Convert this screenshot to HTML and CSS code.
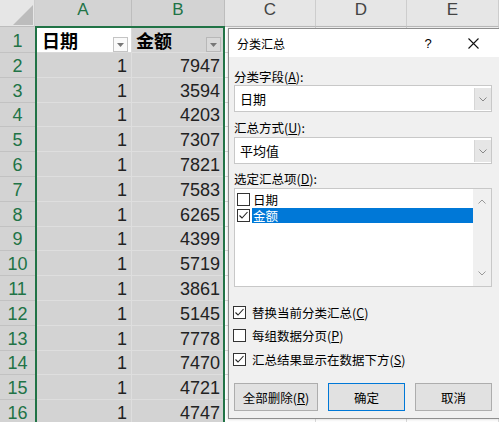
FILE: index.html
```html
<!DOCTYPE html>
<html lang="zh">
<head>
<meta charset="utf-8">
<title>分类汇总</title>
<link rel="stylesheet" href="styles.css">
</head>
<body>
<div class="sheet">
  <div class="corner"><svg width="20" height="20" viewBox="0 0 20 20"><polygon points="20,0 20,20 0,20" fill="#bcbcbc"/></svg></div>
  <div class="ch sel">A</div><div class="ch sel">B</div><div class="ch">C</div><div class="ch">D</div><div class="ch">E</div>

  <div class="rh">1</div>
  <div class="c hd active"><span>日期</span><span class="filt"><svg width="7" height="4" viewBox="0 0 7 4"><polygon points="0,0 7,0 3.5,4" fill="#777"/></svg></span></div>
  <div class="c hd sel b"><span>金额</span><span class="filt dark"><svg width="7" height="4" viewBox="0 0 7 4"><polygon points="0,0 7,0 3.5,4" fill="#777"/></svg></span></div>
  <div class="c"></div><div class="c"></div><div class="c"></div>

  <div class="rh">2</div><div class="c sel num">1</div><div class="c sel num">7947</div><div class="c"></div><div class="c"></div><div class="c"></div>
  <div class="rh">3</div><div class="c sel num">1</div><div class="c sel num">3594</div><div class="c"></div><div class="c"></div><div class="c"></div>
  <div class="rh">4</div><div class="c sel num">1</div><div class="c sel num">4203</div><div class="c"></div><div class="c"></div><div class="c"></div>
  <div class="rh">5</div><div class="c sel num">1</div><div class="c sel num">7307</div><div class="c"></div><div class="c"></div><div class="c"></div>
  <div class="rh">6</div><div class="c sel num">1</div><div class="c sel num">7821</div><div class="c"></div><div class="c"></div><div class="c"></div>
  <div class="rh">7</div><div class="c sel num">1</div><div class="c sel num">7583</div><div class="c"></div><div class="c"></div><div class="c"></div>
  <div class="rh">8</div><div class="c sel num">1</div><div class="c sel num">6265</div><div class="c"></div><div class="c"></div><div class="c"></div>
  <div class="rh">9</div><div class="c sel num">1</div><div class="c sel num">4399</div><div class="c"></div><div class="c"></div><div class="c"></div>
  <div class="rh">10</div><div class="c sel num">1</div><div class="c sel num">5719</div><div class="c"></div><div class="c"></div><div class="c"></div>
  <div class="rh">11</div><div class="c sel num">1</div><div class="c sel num">3861</div><div class="c"></div><div class="c"></div><div class="c"></div>
  <div class="rh">12</div><div class="c sel num">1</div><div class="c sel num">5145</div><div class="c"></div><div class="c"></div><div class="c"></div>
  <div class="rh">13</div><div class="c sel num">1</div><div class="c sel num">7778</div><div class="c"></div><div class="c"></div><div class="c"></div>
  <div class="rh">14</div><div class="c sel num">1</div><div class="c sel num">7470</div><div class="c"></div><div class="c"></div><div class="c"></div>
  <div class="rh">15</div><div class="c sel num">1</div><div class="c sel num">4721</div><div class="c"></div><div class="c"></div><div class="c"></div>
  <div class="rh">16</div><div class="c sel num">1</div><div class="c sel num">4747</div><div class="c"></div><div class="c"></div><div class="c"></div>

  <div class="selbox"></div>
</div>

<div class="dialog">
  <div class="titlebar">
    <span class="title">分类汇总</span>
    <span class="help">?</span>
    <span class="close"><svg width="11" height="11" viewBox="0 0 11 11"><path d="M0.5 0.5 L10.5 10.5 M10.5 0.5 L0.5 10.5" stroke="#111" stroke-width="1.1" fill="none"/></svg></span>
  </div>
  <div class="dbody">
    <div class="lbl">分类字段(<u>A</u>):</div>
    <div class="combo"><span class="val">日期</span><span class="drop"><svg width="8" height="5" viewBox="0 0 8 5"><path d="M0.5 0.5 L4 4 L7.5 0.5" stroke="#888" fill="none"/></svg></span></div>
    <div class="lbl l2">汇总方式(<u>U</u>):</div>
    <div class="combo"><span class="val">平均值</span><span class="drop"><svg width="8" height="5" viewBox="0 0 8 5"><path d="M0.5 0.5 L4 4 L7.5 0.5" stroke="#888" fill="none"/></svg></span></div>
    <div class="lbl l3">选定汇总项(<u>D</u>):</div>
    <div class="list">
      <div class="items">
        <div class="item">
          <svg class="box" width="13" height="13" viewBox="0 0 13 13"><rect x="0.5" y="0.5" width="12" height="12" fill="#fff" stroke="#333"/></svg>
          <span class="txt">日期</span>
        </div>
        <div class="item">
          <svg class="box" width="13" height="13" viewBox="0 0 13 13"><rect x="0.5" y="0.5" width="12" height="12" fill="#fff" stroke="#333"/><path d="M2.5 6.5 L5 9 L10.5 3" fill="none" stroke="#222" stroke-width="1.1"/></svg>
          <span class="txt hl">金额</span>
        </div>
      </div>
      <div class="vscroll">
        <svg width="8" height="5" viewBox="0 0 8 5"><path d="M0.5 4.5 L4 1 L7.5 4.5" stroke="#999" fill="none"/></svg>
        <svg width="8" height="5" viewBox="0 0 8 5"><path d="M0.5 0.5 L4 4 L7.5 0.5" stroke="#999" fill="none"/></svg>
      </div>
    </div>
    <div class="chk c1">
      <svg width="13" height="13" viewBox="0 0 13 13"><rect x="0.5" y="0.5" width="12" height="12" fill="#fff" stroke="#333"/><path d="M2.5 6.5 L5 9 L10.5 3" fill="none" stroke="#222" stroke-width="1.1"/></svg>
      <span>替换当前分类汇总(<u>C</u>)</span>
    </div>
    <div class="chk c2">
      <svg width="13" height="13" viewBox="0 0 13 13"><rect x="0.5" y="0.5" width="12" height="12" fill="#fff" stroke="#333"/></svg>
      <span>每组数据分页(<u>P</u>)</span>
    </div>
    <div class="chk c3">
      <svg width="13" height="13" viewBox="0 0 13 13"><rect x="0.5" y="0.5" width="12" height="12" fill="#fff" stroke="#333"/><path d="M2.5 6.5 L5 9 L10.5 3" fill="none" stroke="#222" stroke-width="1.1"/></svg>
      <span>汇总结果显示在数据下方(<u>S</u>)</span>
    </div>
    <div class="buttons">
      <button class="btn w1">全部删除(<u>R</u>)</button>
      <button class="btn w2 def">确定</button>
      <button class="btn w2">取消</button>
    </div>
  </div>
</div>
</body>
</html>
```

FILE: styles.css
```css
* { box-sizing: border-box; margin: 0; padding: 0; }
html, body { width: 499px; height: 422px; overflow: hidden; }
body {
  position: relative;
  background: #fff;
  font-family: "Liberation Sans", Arial, sans-serif;
}

/* ---------- spreadsheet ---------- */
.sheet {
  display: grid;
  grid-template-columns: 35px 97px 93px 91px 91px 92px;
  grid-template-rows: 27px 26px repeat(15, 24.8px);
  position: relative;
}
.corner {
  background: #e6e6e6;
  border-right: 1px solid #cdcdcd;
  border-bottom: 1px solid #bdbdbd;
  display: flex;
  justify-content: flex-end;
  align-items: flex-end;
  padding: 0 1px 1px 0;
}
.ch {
  background: #e6e6e6;
  border-right: 1px solid #cdcdcd;
  border-bottom: 1px solid #bdbdbd;
  display: flex;
  justify-content: center;
  align-items: flex-start;
  font-size: 17px;
  color: #444;
}
.ch.sel { background: #d3d3d3; color: #217346; border-right-color: #bdbdbd; }
.rh {
  background: #d3d3d3;
  color: #217346;
  border-bottom: 1px solid #c2c2c2;
  display: flex;
  justify-content: center;
  align-items: flex-end;
  font-size: 18px;
  line-height: 21px;
}
.c {
  background: #fff;
  border-right: 1px solid #dadada;
  border-bottom: 1px solid #dadada;
}
.c.sel {
  background: #d3d3d3;
  border-right-color: #dedede;
  border-bottom-color: #dedede;
}
.c.active { background: #fff; }
.num {
  display: flex;
  justify-content: flex-end;
  align-items: flex-end;
  padding-right: 4px;
  font-size: 18px;
  line-height: 21px;
  color: #222;
}
.hd {
  display: flex;
  justify-content: space-between;
  align-items: center;
  padding: 0 3px 0 7px;
  font-family: "Noto Sans CJK SC", "Noto Sans", sans-serif;
  font-weight: bold;
  font-size: 18px;
  color: #000;
}
.hd.b { padding-left: 4px; }
.filt {
  align-self: flex-end;
  width: 15px;
  height: 15px;
  border: 1px solid #c4c4c4;
  background: #fafafa;
  display: flex;
  align-items: center;
  justify-content: center;
}
.filt.dark { background: #d9d9d9; border-color: #b8b8b8; }
.selbox {
  position: absolute;
  left: 35px;
  top: 26px;
  width: 190px;
  height: 400px;
  border: 2px solid #217346;
  pointer-events: none;
}

/* ---------- dialog ---------- */
.dialog {
  position: absolute;
  left: 228px;
  top: 28px;
  width: 271px;
  height: 391px;
  border: 1px solid #8e8e8e;
  border-right: none;
  background: #f0f0f0;
  font-family: "Noto Sans CJK SC", "Noto Sans", sans-serif;
  font-size: 12.5px;
  color: #000;
  box-shadow: 0 0 3px rgba(0,0,0,0.2);
}
.titlebar {
  height: 28px;
  background: #fff;
  display: flex;
  align-items: center;
  padding: 0 3px 0 8px;
  font-size: 12px;
}
.title { flex: 1; }
.help { width: 24px; text-align: center; margin-right: 10px; font-size: 13px; font-family: "Liberation Sans", sans-serif; }
.close { width: 46px; display: flex; justify-content: center; align-items: center; }

.dbody { padding: 11px 0 0 5px; }
.lbl { height: 17px; line-height: 17px; }
.l2 { margin-top: 7px; height: 18px; line-height: 18px; }
.l3 { margin-top: 6px; height: 18px; line-height: 18px; }
u { text-decoration: underline; text-underline-offset: 1px; }

.combo {
  width: 258px;
  height: 27px;
  background: #fff;
  border: 1px solid #c8c8c8;
  display: flex;
  align-items: stretch;
}
.combo .val { flex: 1; padding-left: 5px; display: flex; align-items: center; font-size: 13px; }
.combo .drop {
  width: 17px;
  margin: 2px 0 1px 0;
  background: #e6e6e6;
  border-left: 1px solid #d6d6d6;
  display: flex;
  align-items: center;
  justify-content: center;
}

.list {
  width: 258px;
  height: 99px;
  background: #fff;
  border: 1px solid #c8c8c8;
  display: flex;
}
.items { flex: 1; padding: 2px 0 0 2px; }
.item { height: 16px; display: flex; align-items: center; }
.item .txt { margin-left: 2px; flex: 1; height: 15px; line-height: 15px; padding-left: 1px; font-size: 12.5px; }
.item .hl { background: #0078d7; color: #fff; }
.vscroll {
  width: 18px;
  background: #f0f0f0;
  display: flex;
  flex-direction: column;
  justify-content: space-between;
  align-items: center;
  padding: 10px 0 10px 0;
}

.chk { height: 18px; display: flex; align-items: center; margin-left: -1px; }
.chk span { margin-left: 6px; }
.c1 { margin-top: 16px; }
.c2 { margin-top: 5px; }
.c3 { margin-top: 6px; }

.buttons { display: flex; gap: 10px; margin-top: 15px; }
.btn {
  height: 28px;
  background: #e1e1e1;
  border: 1px solid #adadad;
  font-family: "Noto Sans CJK SC", "Noto Sans", sans-serif;
  font-size: 12.5px;
  color: #000;
}
.w1 { width: 84px; }
.w2 { width: 77px; }
.def { border-color: #0078d7; }
```
